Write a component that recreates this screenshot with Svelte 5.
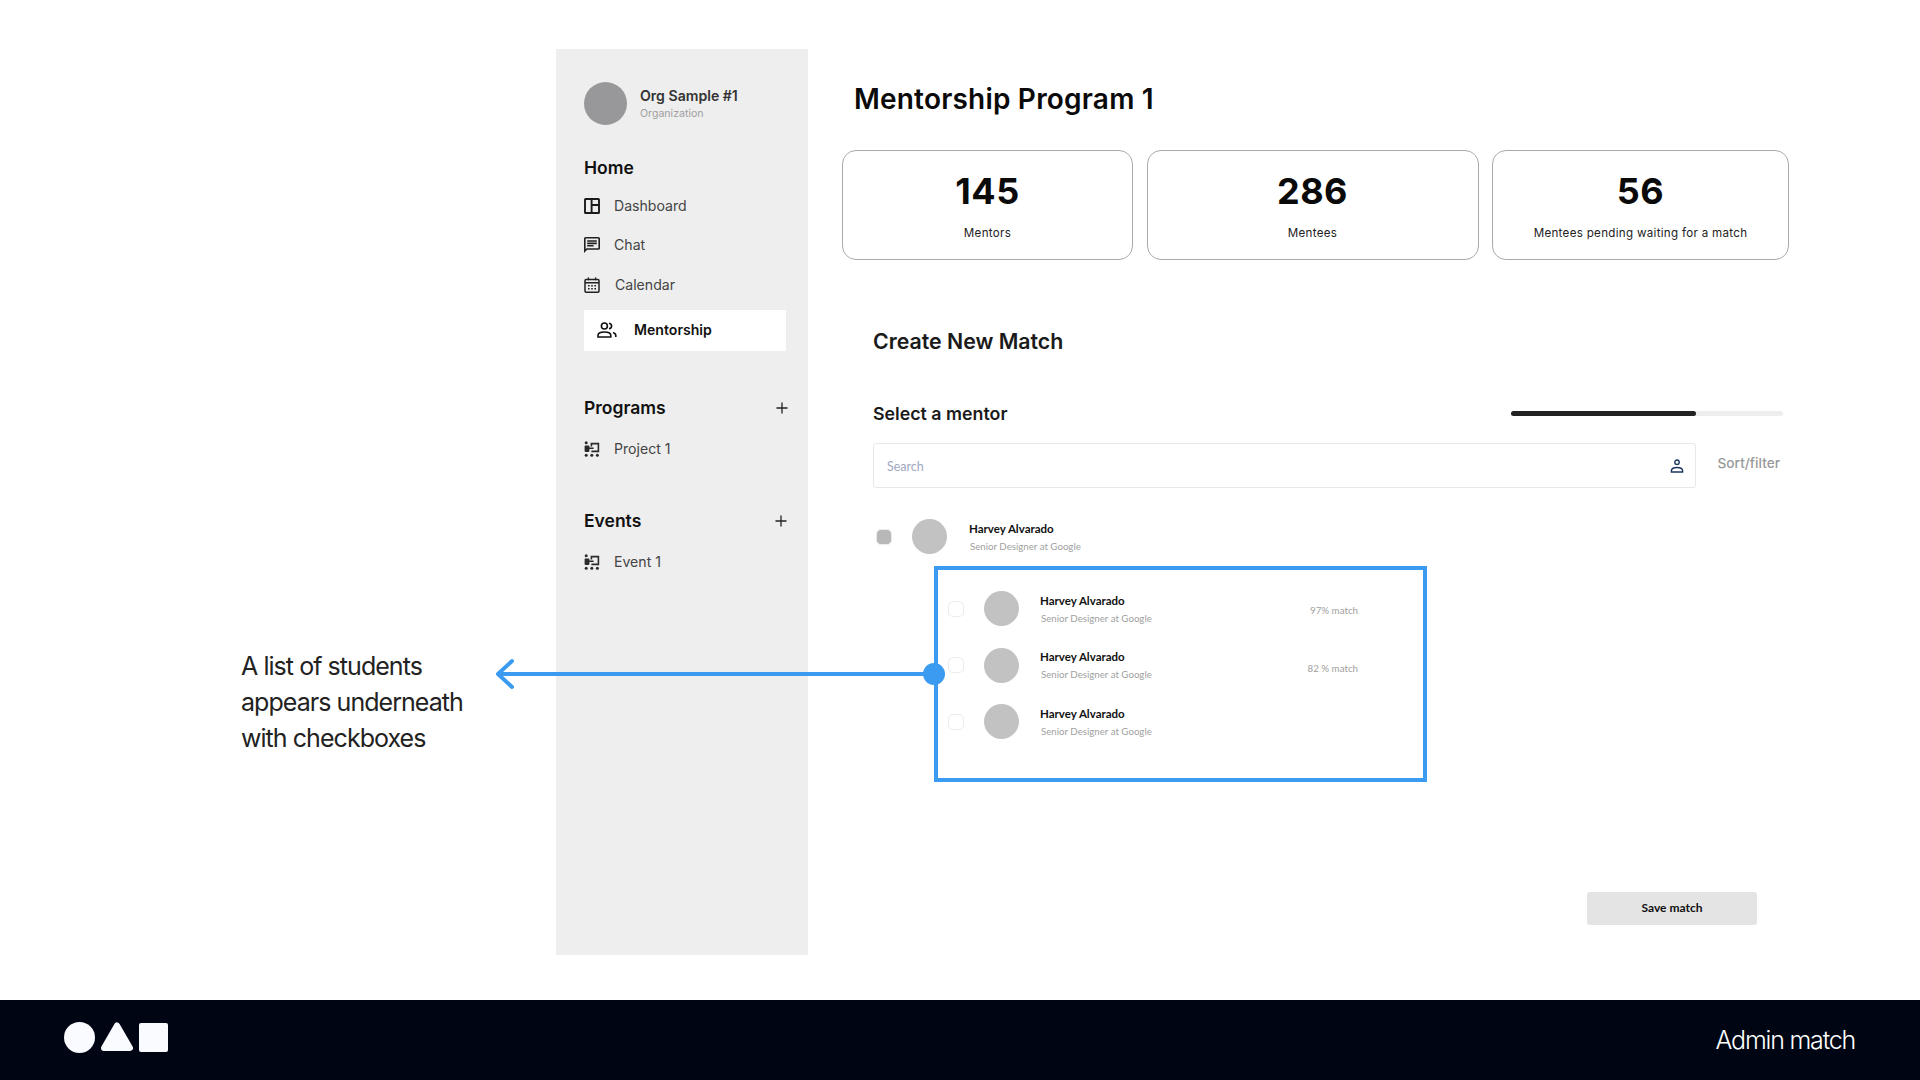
<script lang="ts">
  const stats = [
    { value: '145', label: 'Mentors', width: 291 },
    { value: '286', label: 'Mentees', width: 332 },
    { value: '56', label: 'Mentees pending waiting for a match', width: 297 }
  ];
  const students = [
    { match: '97% match' },
    { match: '82 % match' },
    { match: '' }
  ];
</script>

{#snippet boardIcon()}
  <svg class="icon" viewBox="0 0 16 16" fill="none" stroke="#1a1a1a" stroke-width="1.9">
    <rect x="1" y="1" width="14" height="14" rx="0.6" />
    <path d="M7.6 1v14M7.6 7H15" />
  </svg>
{/snippet}

{#snippet programIcon()}
  <svg class="icon" viewBox="0 0 16 16" fill="#2a2a2a">
    <circle cx="2.2" cy="1.800" r="1.500" />
    <rect x="0.600" y="4.600" width="4.800" height="6.400" rx="1" />
    <path d="M7.400 5.500V2.600H14.400V10.400H7.400M4.500 7.200H9.600" fill="none" stroke="#2a2a2a" stroke-width="1.600" />
    <circle cx="2.200" cy="14.200" r="1.500" />
    <circle cx="7.800" cy="14.200" r="1.500" />
    <circle cx="13.400" cy="14.200" r="1.500" />
  </svg>
{/snippet}

{#snippet plusIcon()}
  <svg class="plus" viewBox="0 0 12 12" fill="none" stroke="#222" stroke-width="1.3">
    <path d="M6 .5v11M.5 6h11" />
  </svg>
{/snippet}

{#snippet person(name: string, sub: string)}
  <div class="who">
    <div class="name">{name}</div>
    <div class="sub">{sub}</div>
  </div>
{/snippet}

<div class="page">
  <main class="stage">
    <aside class="note">
      <p>A list of students<br />appears underneath<br />with checkboxes</p>
    </aside>

    <nav class="sidebar">
      <div class="org">
        <div class="org-avatar"></div>
        <div>
          <div class="org-name">Org Sample #1</div>
          <div class="org-type">Organization</div>
        </div>
      </div>

      <h3 class="home">Home</h3>
      <a class="item dash">
        {@render boardIcon()}
        <span>Dashboard</span>
      </a>
      <a class="item chat">
        <svg class="icon" viewBox="2 2 20 20" fill="#222">
          <path d="M20 2H4c-1.1 0-2 .9-2 2v18l4-4h14c1.1 0 2-.9 2-2V4c0-1.1-.9-2-2-2zm0 14H5.170L4 17.170V4h16v12zM6 12h8v2H6zm0-3h12v2H6zm0-3h12v2H6z" />
        </svg>
        <span>Chat</span>
      </a>
      <a class="item cal">
        <svg class="icon" viewBox="0 0 16 16" fill="none" stroke="#222" stroke-width="1.500">
          <rect x="1" y="2.400" width="14" height="12.800" rx="1.200" />
          <path d="M1 5.800h14M4.400 .4v2.800M11.600 .4v2.800" />
          <path d="M4 8.800h1.600M7.200 8.800h1.600M10.400 8.800H12M4 11.800h1.600M7.200 11.800h1.600M10.400 11.800H12" />
        </svg>
        <span>Calendar</span>
      </a>
      <a class="item active">
        <svg class="icon-lg" viewBox="0 0 20 16" fill="none" stroke="#111" stroke-width="1.600">
          <circle cx="7.400" cy="4" r="3" />
          <path d="M1 15v-1.600c0-2.300 3-3.400 6.400-3.400s6.400 1.100 6.400 3.400V15z" />
          <path d="M12 1.200c1.600.3 2.600 1.400 2.600 2.800S13.600 6.500 12 6.800M16 10.400c1.700.6 2.800 1.600 2.800 3V15" />
        </svg>
        <span>Mentorship</span>
      </a>

      <div class="group programs">
        <h3>Programs</h3>
        {@render plusIcon()}
      </div>
      <a class="item sub-item">
        {@render programIcon()}
        <span>Project 1</span>
      </a>

      <div class="group events">
        <h3>Events</h3>
        {@render plusIcon()}
      </div>
      <a class="item sub-item">
        {@render programIcon()}
        <span>Event 1</span>
      </a>
    </nav>

    <section class="content">
      <h1>Mentorship Program 1</h1>

      <div class="stats">
        {#each stats as s}
          <div class="stat" style="width: {s.width}px">
            <div class="value">{s.value}</div>
            <div class="label">{s.label}</div>
          </div>
        {/each}
      </div>

      <div class="form">
        <h2>Create New Match</h2>

        <div class="step">
          <h4>Select a mentor</h4>
          <div class="progress"><div class="fill" style="width: 68%"></div></div>
        </div>

        <div class="search-row">
          <div class="search">
            <span class="placeholder">Search</span>
            <svg class="search-icon" viewBox="0 0 14 14" fill="none" stroke="#1c3560" stroke-width="1.400">
              <circle cx="7" cy="3.200" r="2.200" />
              <path d="M1.400 13v-1.200c0-2 2.600-3.300 5.600-3.300s5.600 1.300 5.600 3.300V13z" />
            </svg>
          </div>
          <span class="sort">Sort/filter</span>
        </div>

        <div class="mentor">
          <div class="check checked"></div>
          <div class="avatar"></div>
          {@render person('Harvey Alvarado', 'Senior Designer at Google')}
        </div>

        <div class="students">
          {#each students as st}
            <div class="student">
              <div class="check"></div>
              <div class="avatar"></div>
              {@render person('Harvey Alvarado', 'Senior Designer at Google')}
              <span class="match">{st.match}</span>
            </div>
          {/each}

          <div class="connector">
            <div class="line"></div>
            <div class="dot"></div>
            <svg class="head" viewBox="0 0 20 32" fill="none" stroke="#3a9bf0" stroke-width="4" stroke-linecap="round" stroke-linejoin="round">
              <path d="M17 3 3 16l14 13" />
            </svg>
          </div>
        </div>

        <div class="actions">
          <button>Save match</button>
        </div>
      </div>
    </section>
  </main>

  <footer class="bar">
    <div class="shapes">
      <span class="circle"></span>
      <svg class="triangle" viewBox="0 0 32 29">
        <path d="M16 3.500 29 26H3z" fill="#fafbff" stroke="#fafbff" stroke-width="6" stroke-linejoin="round" />
      </svg>
      <span class="square"></span>
    </div>
    <span class="caption">Admin match</span>
  </footer>
</div>

<style>
  :global(body) { margin: 0; background: #fff; }

  .page { width: 1920px; height: 1080px; display: flex; flex-direction: column; font-family: Inter, "Liberation Sans", sans-serif; overflow: hidden; }

  .stage { height: 1000px; display: flex; box-sizing: border-box; padding-top: 49px; }

  .note { width: 556px; flex: none; box-sizing: border-box; padding: 599px 0 0 241px; }
  .note p { margin: 0; font-size: 25px; line-height: 36px; letter-spacing: -0.95px; color: #222; }

  .sidebar { width: 252px; height: 906px; flex: none; box-sizing: border-box; background: #eee; padding: 33px 22px 0 28px; display: flex; flex-direction: column; }

  .org { display: flex; align-items: center; gap: 13px; }
  .org-avatar { width: 43px; height: 43px; border-radius: 50%; background: #98989a; }
  .org-name { font-size: 14.100px; font-weight: 600; color: #333; line-height: 18px; padding-top: 1px; }
  .org-type { font-size: 10.600px; color: #a0a0a0; line-height: 14px; margin-top: 2px; }

  h3 { margin: 0; font-size: 17.500px; font-weight: 600; color: #111; line-height: 22px; }
  .home { margin-top: 31.500px; }

  .item { display: flex; align-items: center; gap: 14px; font-size: 14.100px; color: #444; line-height: 20px; }
  .dash { margin-top: 17px; }
  .chat { margin-top: 19px; }
  .cal { margin-top: 20px; gap: 15px; }
  .active { margin-top: 15px; height: 41px; background: #fff; padding-left: 13px; gap: 17px; color: #111; font-weight: 600; width: 202px; box-sizing: border-box; }

  .icon { width: 16px; height: 16px; flex: none; }
  .icon-lg { width: 20px; height: 16px; flex: none; }
  .plus { width: 12px; height: 12px; margin-right: -2px; }

  .group { display: flex; align-items: center; justify-content: space-between; }
  .programs { margin-top: 46px; }
  .events { margin-top: 51px; }
  .events .plus { margin-right: -1px; }
  .sub-item { margin-top: 20px; }

  .content { width: 947px; flex: none; margin-left: 34px; }

  h1 { margin: 30.500px 0 0 12px; font-size: 28px; font-weight: 600; line-height: 39px; color: #0a0a0a; letter-spacing: 0.2px; }

  .stats { display: flex; gap: 13.500px; margin-top: 31.500px; }
  .stat { height: 110px; box-sizing: border-box; border: 1px solid #aaa; border-radius: 14px; text-align: center; padding-top: 18px; }
  .value { font-size: 36px; font-weight: 700; line-height: 44px; color: #0a0a0a; letter-spacing: 0.5px; }
  .label { font-size: 11.600px; line-height: 16px; color: #222; margin-top: 12px; letter-spacing: 0.3px; }

  .form { padding: 0 6px 0 31px; }
  h2 { margin: 66.500px 0 0; font-size: 21.300px; font-weight: 600; line-height: 28px; color: #1a1a1a; }

  .step { display: flex; align-items: center; justify-content: space-between; margin-top: 46.500px; height: 24px; }
  h4 { margin: 0; font-size: 17.800px; font-weight: 600; color: #1a1a1a; }
  .progress { width: 272px; height: 5px; background: #eee; border-radius: 3px; }
  .fill { height: 100%; background: #222; border-radius: 3px; }

  .search-row { display: flex; gap: 21.500px; margin-top: 18px; align-items: flex-start; }
  .search { width: 823px; height: 45px; box-sizing: border-box; border: 1px solid #e8e8ec; border-radius: 3px; padding: 0 11px 0 13px; display: flex; align-items: center; justify-content: space-between; font-family: Lato, sans-serif; font-size: 12.500px; color: #a0a8c0; }
  .placeholder { padding-top: 1px; }
  .search-icon { width: 14px; height: 14px; }
  .sort { font-size: 13.700px; font-weight: 500; color: #999; line-height: 18px; margin-top: 11px; }

  .who { font-family: Lato, sans-serif; }
  .name { font-size: 11.500px; font-weight: 700; color: #111; line-height: 16px; }
  .sub { font-size: 9.700px; color: #a0a0a0; line-height: 14px; margin: 2px 0 0 1px; }

  .check { width: 16px; height: 16px; box-sizing: border-box; border: 1.500px solid #ececec; border-radius: 5px; flex: none; }
  .checked { background: #b8b8b8; }
  .avatar { width: 35px; height: 35px; border-radius: 50%; background: #c2c2c2; flex: none; }

  .mentor { display: flex; align-items: center; margin-top: 31px; padding-left: 3px; }
  .mentor .check { margin-right: 20px; }
  .mentor .who { margin-left: 22px; }

  .students { position: relative; width: 493px; height: 216px; box-sizing: border-box; border: 4px solid #3a9bf0; margin: 12px 0 0 61px; padding: 21px 0 0 10px; }
  .student { display: flex; align-items: center; height: 35px; margin-bottom: 21.500px; position: relative; }
  .student .check { margin-right: 20px; }
  .student .who { margin-left: 21px; }
  .match { position: absolute; right: 65px; top: 12.500px; font-family: Lato, sans-serif; font-size: 9.750px; color: #a0a0a0; }
  .student:nth-child(2) .match { top: 14px; }

  /* callout joining the highlighted list to the note on the left */
  .connector { position: absolute; left: -4px; top: 104px; width: 0; height: 0; }
  .line { position: absolute; right: 0; top: -2px; width: 434px; height: 4px; background: #3a9bf0; }
  .dot { position: absolute; left: -11px; top: -11px; width: 22px; height: 22px; border-radius: 50%; background: #3a9bf0; }
  .head { position: absolute; left: -439px; top: -16px; width: 20px; height: 32px; }

  .actions { display: flex; justify-content: flex-end; margin: 110px 26px 0 0; }
  button { width: 170px; height: 33px; border: none; border-radius: 3px; background: #e4e4e4; font-family: Lato, sans-serif; font-size: 12px; font-weight: 700; color: #111; padding: 0 0 3px; }

  .bar { height: 80px; background: #000513; display: flex; align-items: center; justify-content: space-between; padding: 0 65px 0 64px; }
  .shapes { display: flex; align-items: center; gap: 6px; padding-bottom: 5px; }
  .circle { width: 31px; height: 31px; border-radius: 50%; background: #fafbff; }
  .triangle { width: 32px; height: 29px; margin-top: -2px; }
  .square { width: 29px; height: 29px; border-radius: 2px; background: #fafbff; }
  .caption { font-size: 25px; font-weight: 300; letter-spacing: -1.200px; color: #fff; }
</style>
